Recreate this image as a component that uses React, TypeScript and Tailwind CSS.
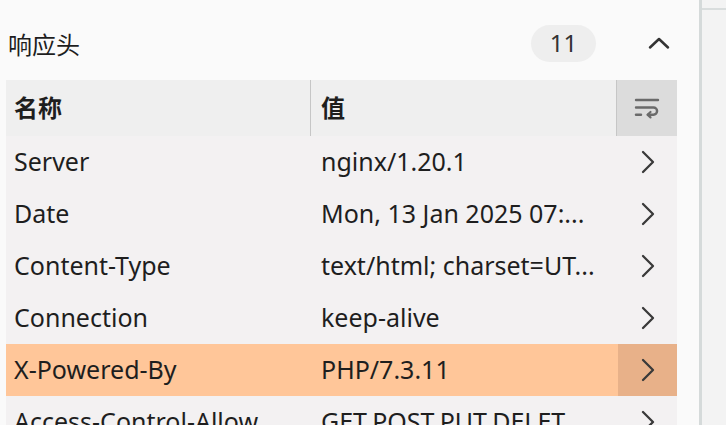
import React from "react";

const rows: { name: string; value: string; active?: boolean }[] = [
  { name: "Server", value: "nginx/1.20.1" },
  { name: "Date", value: "Mon, 13 Jan 2025 07:..." },
  { name: "Content-Type", value: "text/html; charset=UT..." },
  { name: "Connection", value: "keep-alive" },
  { name: "X-Powered-By", value: "PHP/7.3.11", active: true },
  { name: "Access-Control-Allow...", value: "GET,POST,PUT,DELET..." },
];

function ChevronRight() {
  return (
    <svg width="16" height="24" viewBox="0 0 16 24" fill="none">
      <path d="M3 2 L13 12 L3 22" stroke="#3a3a3a" strokeWidth="2.3" strokeLinecap="round" strokeLinejoin="round" />
    </svg>
  );
}

function WrapIcon() {
  return (
    <svg width="26" height="22" viewBox="0 0 26 22" fill="none">
      <path d="M2 3 H24" stroke="#6a6a6a" strokeWidth="2.4" strokeLinecap="round" />
      <path d="M2 10.5 H19.5 a3.6 3.6 0 0 1 0 7.2 H14" stroke="#6a6a6a" strokeWidth="2.4" strokeLinecap="round" />
      <path d="M16.5 15 L13.5 17.7 L16.5 20.4" stroke="#6a6a6a" strokeWidth="2.2" strokeLinecap="round" strokeLinejoin="round" />
      <path d="M2 17.7 H7" stroke="#6a6a6a" strokeWidth="2.4" strokeLinecap="round" />
    </svg>
  );
}

export default function App() {
  return (
    <div
      className="flex w-[726px] h-[425px] overflow-hidden bg-[#fafafa] text-[#1e1e1e]"
      style={{ fontFamily: '"Noto Sans", "Noto Sans CJK SC", sans-serif' }}
    >
      <div className="w-[699px] shrink-0 flex flex-col pl-[6px] pr-[22px]">
        <div className="h-[80px] shrink-0 flex items-center pt-[6px]">
          <div className="text-[24px] pl-[2px] flex-1 leading-none pt-[4px]">响应头</div>
          <div className="w-[65px] h-[37px] rounded-full bg-[#eeeeee] flex items-center justify-center text-[24px] text-[#333] mr-[51px]">
            11
          </div>
          <svg width="24" height="14" viewBox="0 0 24 14" fill="none" className="mr-[6px]">
            <path d="M3 11.5 L12 3 L21 11.5" stroke="#333" strokeWidth="2.5" strokeLinecap="round" strokeLinejoin="round" />
          </svg>
        </div>
        <div className="flex h-[56px] shrink-0 bg-[#efefef] font-bold text-[24px]">
          <div className="w-[305px] flex items-center pl-[8px] border-r border-[#c6c6c6]">名称</div>
          <div className="w-[306px] flex items-center pl-[10px] border-r border-[#c6c6c6]">值</div>
          <div className="flex-1 flex items-center justify-center bg-[#dcdcdc]">
            <WrapIcon />
          </div>
        </div>
        {rows.map((r) => (
          <div
            key={r.name}
            className={`flex h-[52px] shrink-0 text-[25px] ${r.active ? "bg-[#ffc699]" : "bg-[#f3f1f2]"}`}
          >
            <div className="w-[306px] flex items-center pl-[8px] whitespace-nowrap overflow-hidden">{r.name}</div>
            <div className="w-[306px] flex items-center pl-[9px] whitespace-nowrap overflow-hidden">{r.value}</div>
            <div className={`flex-1 flex items-center justify-center ${r.active ? "bg-[#e8b189]" : ""}`}>
              <ChevronRight />
            </div>
          </div>
        ))}
      </div>
      <div className="w-[3px] bg-[#d5dada] shrink-0" />
      <div className="flex-1 bg-[#f3f3f3] flex flex-col">
        <div className="h-[10px] shrink-0 border-b-2 border-[#d9dddd]" />
      </div>
    </div>
  );
}
